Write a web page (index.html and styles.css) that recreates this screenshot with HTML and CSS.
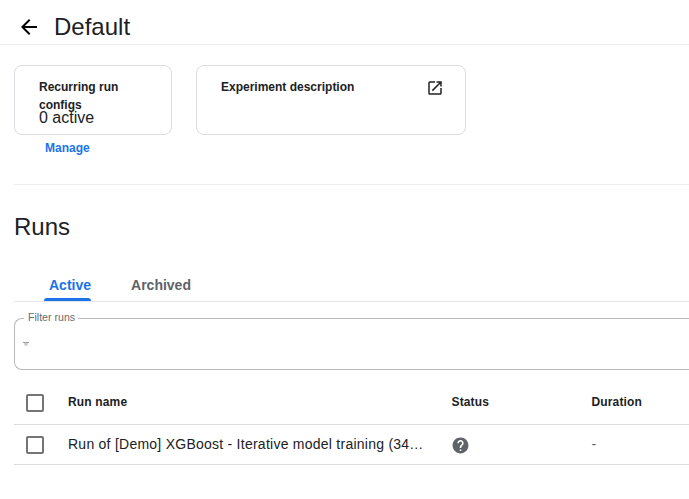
FILE: index.html
```html
<!DOCTYPE html>
<html lang="en"><head><meta charset="utf-8"><title>Default</title><link rel="stylesheet" href="styles.css"></head>
<body>
<header class="topbar">
<svg class="back" viewBox="0 0 24 24"><path d="M20 11H7.83l5.59-5.59L12 4l-8 8 8 8 1.41-1.41L7.83 13H20v-2z"/></svg>
<h1>Default</h1>
</header>
<section class="cards">
<div class="recurring"><div class="card"><div class="label">Recurring run configs</div><div class="count">0 active</div></div><a class="manage">Manage</a></div>
<div class="card desc"><div class="label">Experiment description</div>
<svg class="open" viewBox="0 0 24 24"><path d="M19 19H5V5h7V3H5a2 2 0 0 0-2 2v14a2 2 0 0 0 2 2h14c1.100 0 2-.9 2-2v-7h-2v7zM14 3v2h3.590l-9.830 9.830 1.410 1.410L19 6.410V10h2V3h-7z"/></svg></div>
</section>
<main>
<h2>Runs</h2>
<nav class="tabs"><span class="tab active">Active</span><span class="tab">Archived</span></nav>
<fieldset class="filter"><legend>Filter runs</legend>
<svg class="funnel" viewBox="0 0 6 4"><path class="bar" d="M0 0h6v1H0z"/><path d="M1 1h4v2H1zM2 3h2v1H2z"/></svg></fieldset>
<div class="row head"><svg class="box" viewBox="0 0 24 24"><path d="M19 5v14H5V5h14m0-2H5c-1.100 0-2 .9-2 2v14c0 1.100.9 2 2 2h14c1.100 0 2-.9 2-2V5c0-1.100-.9-2-2-2z"/></svg><span>Run name</span><span>Status</span><span>Duration</span></div>
<div class="row"><svg class="box" viewBox="0 0 24 24"><path d="M19 5v14H5V5h14m0-2H5c-1.100 0-2 .9-2 2v14c0 1.100.9 2 2 2h14c1.100 0 2-.9 2-2V5c0-1.100-.9-2-2-2z"/></svg><span class="name">Run of [Demo] XGBoost - Iterative model training (34…</span>
<svg class="help" viewBox="0 0 24 24"><path d="M12 2C6.480 2 2 6.480 2 12s4.480 10 10 10 10-4.480 10-10S17.520 2 12 2zm1 17h-2v-2h2v2zm2.070-7.750l-.9.920C13.450 12.900 13 13.500 13 15h-2v-.5c0-1.100.45-2.100 1.170-2.830l1.240-1.260c.37-.36.59-.86.59-1.410 0-1.100-.9-2-2-2s-2 .9-2 2H8c0-2.210 1.790-4 4-4s4 1.790 4 4c0 .88-.36 1.680-.93 2.250z"/></svg><span class="dash">-</span></div>
</main>
</body></html>
```
FILE: styles.css
```css
*{box-sizing:border-box}
body{margin:0;width:689px;height:499px;overflow:hidden;background:#fff;color:#202124;font-family:"Liberation Sans",Arial,sans-serif}
svg{display:block;flex:none}
h1,h2{margin:0;font-size:24px;font-weight:400;line-height:28px}
.topbar{height:45px;padding:9px 0 0 17px;display:flex;border-bottom:1px solid #eee}
.back{width:24px;height:24px;margin-top:6px;fill:#000}
.topbar h1{margin:4px 0 0 13px}
.cards{height:140px;margin-left:14px;padding-top:20px;display:flex;gap:24px;border-bottom:1px solid #eee}
.card{width:158px;height:70px;border:1px solid #dadce0;border-radius:8px;padding:12px 24px 0}
.label{font-size:12px;font-weight:700;line-height:18px}
.count{font-size:16px;line-height:18px;margin-top:-5px}
.manage{display:block;margin:5px 0 0 31px;font-size:12px;font-weight:700;line-height:16px;color:#1a73e8}
.desc{width:270px;display:flex;justify-content:space-between;padding-right:21px}
.open{width:18px;height:18px;margin-top:1px;fill:#222}
main{margin-left:14px}
h2{padding-top:28px;height:84px}
.tabs{height:33px;border-bottom:1px solid #e4e4e4;display:flex;gap:40px;padding-left:35px}
.tab{font-size:14px;font-weight:700;line-height:16px;padding-top:8px;color:#5f6368}
.active{color:#1a73e8;position:relative}
.active::after{content:"";position:absolute;left:-5px;right:0;bottom:0;height:3px;border-radius:3px 3px 0 0;background:#1a73e8}
.filter{margin:8px 0 0;height:60px;border:1px solid #b8b8b8;border-right:0;border-radius:8px 0 0 8px;padding:0 0 0 8px}
legend{font-size:10.6px;line-height:14px;padding:0 3px 2px 4px;margin-left:1px;color:#6b6b6b}
.funnel{width:6px;height:4px;margin-top:16px;fill:#d0d0d0}
.funnel .bar{fill:#999}
.row{height:40px;display:grid;grid-template-columns:54px 383.500px 140px 1fr;align-items:center;border-bottom:1px solid #ddd;font-size:14px}
.head{height:55px;padding-top:10px;font-size:12px;font-weight:700;letter-spacing:.15px}
.box{width:24px;height:24px;margin-left:9px;fill:#757575}
.head .box{position:relative;top:1px}
.name{letter-spacing:.25px;white-space:nowrap;padding-bottom:2px}
.help{width:19px;height:19px;margin:1px 0 0 -1px;fill:#5f6368}
.dash{color:#5f6368;padding-bottom:1px}
```
